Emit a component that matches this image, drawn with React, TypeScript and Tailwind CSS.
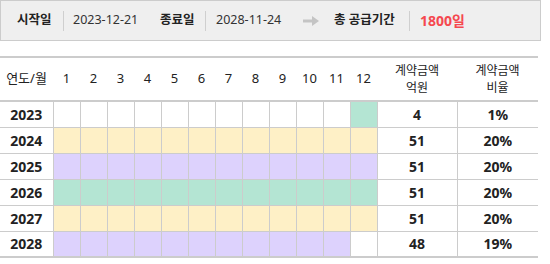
const months = [1, 2, 3, 4, 5, 6, 7, 8, 9, 10, 11, 12]

const Y = "bg-[#fef0c6]"
const P = "bg-[#ddd2fd]"
const G = "bg-[#b4e5d3]"

const rows = [
  { year: 2023, cells: [...Array(11).fill(""), G], amount: "4", ratio: "1%" },
  { year: 2024, cells: Array(12).fill(Y), amount: "51", ratio: "20%" },
  { year: 2025, cells: Array(12).fill(P), amount: "51", ratio: "20%" },
  { year: 2026, cells: Array(12).fill(G), amount: "51", ratio: "20%" },
  { year: 2027, cells: Array(12).fill(Y), amount: "51", ratio: "20%" },
  { year: 2028, cells: [...Array(11).fill(P), ""], amount: "48", ratio: "19%" },
]

const Divider = () => <div className="h-[20px] w-px shrink-0 bg-[#cfcfcf]"></div>

export default function App() {
  return (
    <div className="w-[550px] h-[264px] bg-white text-[#222]" style={{ fontFamily: '"Noto Sans", "Noto Sans CJK KR", sans-serif' }}>
      <div className="flex h-[41px] w-[541px] items-center whitespace-nowrap border border-[#cccccc] bg-[#efefef] pl-[16px]">
        <span className="w-[37px] shrink-0 text-[12.5px] font-bold">시작일</span>
        <div className="ml-[9px] mr-[9px]"><Divider /></div>
        <span className="w-[65px] shrink-0 text-[12.5px] text-[#333]">2023-12-21</span>
        <span className="ml-[22px] w-[36px] shrink-0 text-[12.5px] font-bold">종료일</span>
        <div className="ml-[9px] mr-[10px]"><Divider /></div>
        <span className="w-[66px] shrink-0 text-[12.5px] text-[#333]">2028-11-24</span>
        <svg className="ml-[21px] shrink-0" width="17" height="12" viewBox="0 0 17 12">
          <path d="M0 6 H11" stroke="#c4c4c4" strokeWidth="3" />
          <path d="M9 1 L16 6 L9 11 Z" fill="#c4c4c4" />
        </svg>
        <span className="ml-[14px] w-[63px] shrink-0 text-[12.5px] font-bold">총 공급기간</span>
        <div className="ml-[12px] mr-[10px]"><Divider /></div>
        <span className="text-[14px] font-bold text-[#f5484f]">1800일</span>
      </div>
      <table className="mt-[15px] w-[538px] table-fixed border-collapse">
        <colgroup>
          <col className="w-[53px]" />
          {months.map((m) => (
            <col key={m} className="w-[27px]" />
          ))}
          <col className="w-[80px]" />
          <col className="w-[81px]" />
        </colgroup>
        <thead>
          <tr className="h-[44px] border-t-2 border-b-2 border-[#cccccc] text-[13px] font-normal">
            <th className="p-0 font-normal">연도/월</th>
            {months.map((m) => (
              <th key={m} className="p-0 font-normal">{m}</th>
            ))}
            <th className="p-0 text-[12px] font-normal leading-[17px]">계약금액<br />억원</th>
            <th className="p-0 text-[12px] font-normal leading-[17px]">계약금액<br />비율</th>
          </tr>
        </thead>
        <tbody className="border-b-2 border-[#cccccc]">
          {rows.map((r) => (
            <tr key={r.year} className="h-[26px] text-[14px] font-bold">
              <td className="border-t border-r border-[#cccccc] p-0 text-center">{r.year}</td>
              {r.cells.map((c, i) => (
                <td key={i} className={`border border-[#cccccc] p-0 ${c}`}></td>
              ))}
              <td className="border border-[#cccccc] p-0 text-center">{r.amount}</td>
              <td className="border-t border-l border-[#cccccc] p-0 text-center">{r.ratio}</td>
            </tr>
          ))}
        </tbody>
      </table>
    </div>
  )
}
